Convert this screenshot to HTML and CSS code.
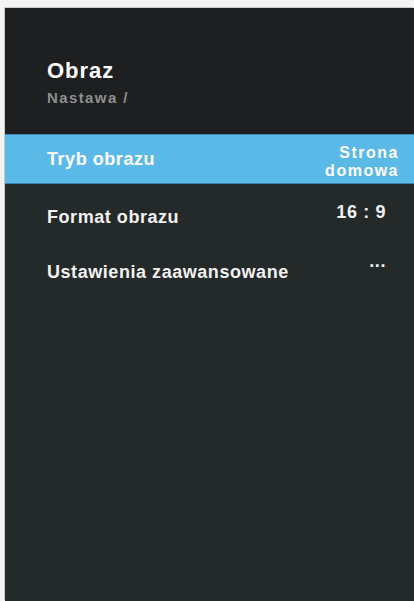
FILE: index.html
```html
<!DOCTYPE html>
<html lang="pl">
<head>
<meta charset="utf-8">
<title>Obraz</title>
<link rel="stylesheet" href="styles.css">
</head>
<body>
<div class="panel">
  <header class="header">
    <h1 class="title">Obraz</h1>
    <div class="crumb">Nastawa /</div>
  </header>
  <ul class="menu">
    <li class="row row-active">
      <span class="label">Tryb obrazu</span>
      <span class="value value-wide">Strona<br>domowa</span>
    </li>
    <li class="row">
      <span class="label">Format obrazu</span>
      <span class="value value-ratio">16 : 9</span>
    </li>
    <li class="row">
      <span class="label">Ustawienia zaawansowane</span>
      <span class="value value-more">...</span>
    </li>
  </ul>
</div>
</body>
</html>
```
FILE: styles.css
```css
html, body {
  margin: 0;
  padding: 0;
  background: #f3f3f3;
  height: 100%;
  overflow: hidden;
}

body {
  font-family: "Liberation Sans", Arial, sans-serif;
  font-weight: bold;
}

.panel {
  margin: 8px 0 0 5px;
  height: 593px;
  background: #242929;
  display: flex;
  flex-direction: column;
  box-shadow: -1px -1px 0 #c9c9c9;
}

.header {
  background: #1e1f20;
  padding: 50px 0 27px 42px;
}

.title {
  margin: 0;
  font-size: 22px;
  line-height: 26px;
  letter-spacing: 1px;
  color: #ffffff;
  font-weight: bold;
}

.crumb {
  margin-top: 5px;
  font-size: 15px;
  line-height: 18px;
  letter-spacing: 1.4px;
  color: #8d8f90;
}

.menu {
  list-style: none;
  margin: 0;
  padding: 0;
  display: flex;
  flex-direction: column;
}

.row {
  display: flex;
  align-items: center;
  justify-content: space-between;
  height: 55px;
  padding: 0 28px 0 42px;
  color: #f2f2f2;
  font-size: 18px;
  line-height: 22px;
  letter-spacing: 0.55px;
}

.row-active {
  height: 50px;
  margin-bottom: 5px;
  background: #5bb9e8;
  color: #ffffff;
  padding-right: 15px;
  box-shadow: inset 0 1px 0 #3f86ad, inset 0 -1px 0 #3f86ad;
}

.value {
  text-align: right;
  letter-spacing: 0.6px;
}

.value-wide {
  font-size: 16px;
  line-height: 18px;
  letter-spacing: 1.5px;
  padding-top: 5px;
}

.value-ratio {
  margin-bottom: 9px;
}

.value-more {
  margin-bottom: 22px;
}
```
